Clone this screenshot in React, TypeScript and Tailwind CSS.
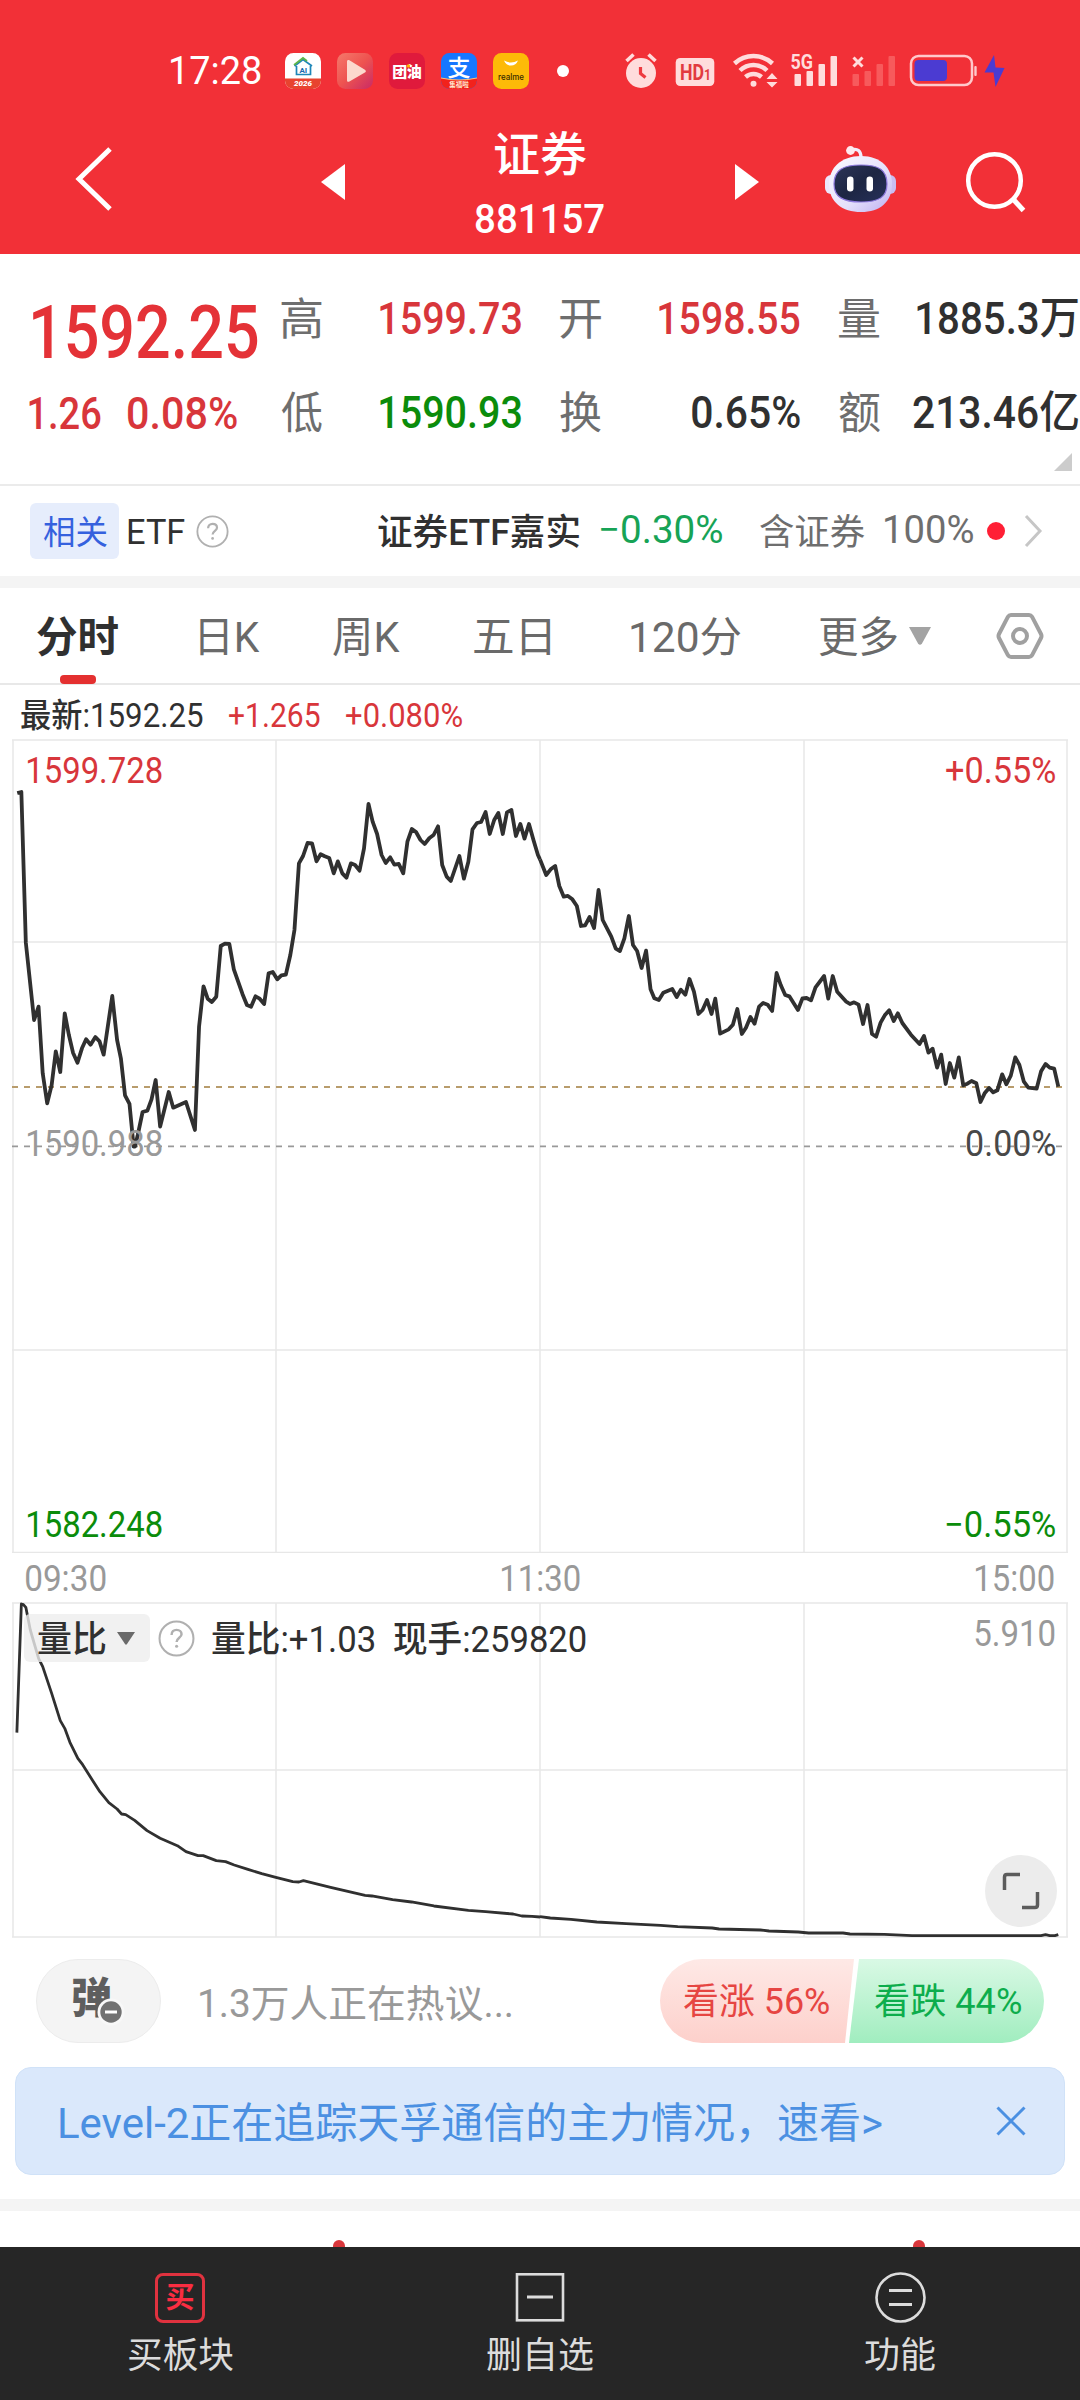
import { useLayoutEffect, useRef, type ReactNode } from "react";

/** Single line of text whose ink is stretched to exactly fill the width of its box. */
function Fit({ children, className = "" }: { children: string; className?: string }) {
  const box = useRef<HTMLSpanElement>(null);
  const inner = useRef<HTMLSpanElement>(null);
  useLayoutEffect(() => {
    if (!box.current || !inner.current) return;
    const cs = getComputedStyle(inner.current);
    const ctx = document.createElement("canvas").getContext("2d");
    if (!ctx) return;
    ctx.font = `${cs.fontWeight} ${cs.fontSize} ${cs.fontFamily}`;
    const m = ctx.measureText(children);
    const ink = m.actualBoundingBoxLeft + m.actualBoundingBoxRight;
    const k = box.current.clientWidth / ink;
    inner.current.style.transform = `scaleX(${k}) translateX(${m.actualBoundingBoxLeft}px)`;
  });
  return (
    <span ref={box} className={`block shrink-0 leading-none ${className}`}>
      <span ref={inner} className="inline-block origin-left align-top whitespace-pre">
        {children}
      </span>
    </span>
  );
}

const MORNING =
  "50,189 62,186 75,638 99,870 112,830 124,1030 137,1120 150,1065 162,964 175,1026 188,850 200,915 212,968 225,998 238,955 250,928 263,944 277,921 289,934 301,974 326,798 340,930 351,985 363,1096 376,1122 388,1250 392,1250 400,1215 414,1146 428,1142 440,1108 452,1050 465,1190 490,1086 503,1133 540,1116 566,1200 578,890 591,769 603,806 615,816 628,800 641,648 653,641 666,642 679,718 704,792 717,825 729,830 742,799 754,806 767,822 780,730 792,726 805,748 817,736 830,734 843,675 855,600 868,400 880,378 893,339 906,340 919,394 931,373 943,379 956,384 969,430 981,394 994,430 1006,443 1019,400 1031,405 1044,422 1057,355 1070,222 1082,275 1095,312 1108,375 1120,399 1133,382 1145,404 1158,402 1171,430 1183,335 1196,297 1208,306 1221,330 1233,342 1247,324 1259,315 1272,289 1284,405 1297,440 1309,453 1334,378 1347,446 1360,395 1372,298 1385,279 1397,276 1410,246 1422,312 1435,270 1447,249 1460,312 1472,247 1485,240 1498,318 1511,282 1523,326 1536,282 1549,330 1562,375 1568,388";
const AFTERNOON =
  "0,388 18,435 31,418 44,408 56,468 69,500 81,498 94,508 107,528 119,588 131,586 144,561 157,594 170,480 182,570 207,620 220,656 232,663 245,625 258,558 270,645 282,663 295,714 308,662 321,778 332,805 345,810 358,788 384,777 397,801 409,779 422,794 434,747 447,785 460,852 472,840 485,810 498,852 509,806 523,911 548,898 560,884 573,837 586,912 598,893 611,861 623,881 636,830 648,819 661,824 674,843 687,729 699,765 712,795 724,799 749,840 762,805 774,804 787,811 800,772 825,738 837,806 850,738 863,785 888,814 900,822 912,817 925,824 938,882 951,825 964,912 976,920 989,878 1001,856 1014,841 1027,873 1039,850 1052,879 1077,914 1102,942 1115,918 1128,968 1140,956 1153,1013 1165,974 1178,1062 1190,999 1203,1043 1216,982 1229,1066 1241,1061 1253,1053 1267,1060 1279,1116 1291,1090 1304,1074 1316,1087 1328,1081 1342,1033 1354,1063 1367,1037 1380,982 1392,1005 1405,1055 1418,1073 1442,1076 1455,1024 1468,1002 1480,1013 1493,1016 1505,1070";
const VOL_MORNING =
  "49,698 62,312 68,314 75,322 88,390 112,475 124,500 150,580 175,662 188,685 203,727 226,775 240,794 268,840 290,875 316,908 340,927 353,942 365,944 391,961 427,992 465,1015 515,1037 540,1055 575,1067 590,1067 628,1082 655,1085 680,1095 720,1108 760,1121 801,1132 850,1145 868,1146 881,1142 960,1162 1060,1186 1080,1188 1140,1199 1195,1206 1260,1218 1360,1231 1410,1235 1490,1242 1515,1248 1545,1249 1568,1251";
const VOL_AFTERNOON =
  "0,1250 30,1254 90,1258 165,1266 250,1271 350,1276 400,1280 500,1284 520,1287 640,1290 665,1293 750,1296 780,1299 880,1299 900,1302 1000,1303 1080,1307 1455,1307 1468,1304 1480,1307 1495,1307 1505,1304";

function Line({ a, b, w, dy }: { a: string; b: string; w: number; dy: number }) {
  const common = {
    fill: "none",
    stroke: "#303030",
    strokeWidth: w,
    strokeLinejoin: "round" as const,
    vectorEffect: "non-scaling-stroke" as const,
  };
  return (
    <g transform={`translate(0 ${dy}) scale(.34439 .33333)`}>
      <polyline points={a} {...common} />
      <polyline points={b} transform="translate(1568 0)" {...common} />
    </g>
  );
}

function Grid({ rows, h }: { rows: number[]; h: number }) {
  return (
    <g stroke="#e7e7e7" strokeWidth="1.5">
      {[13, 276, 540, 804, 1067].map((x) => (
        <line key={x} x1={x} x2={x} y1={rows[0]} y2={h} />
      ))}
      {rows.map((y) => (
        <line key={y} x1="12" x2="1068" y1={y} y2={y} />
      ))}
    </g>
  );
}

function Help({ className, size }: { className: string; size: number }) {
  return (
    <svg width={size} height={size} viewBox="0 0 36 36" className={`shrink-0 ${className}`} fill="none" stroke="#b0b0b0" strokeWidth="2">
      <circle cx="18" cy="18" r="16.5" />
      <path d="M13.2 14.5c0-3 2-4.900 4.900-4.900s4.800 1.800 4.800 4.300c0 3.300-4.800 3.500-4.800 7.400" strokeWidth="2.400" />
      <circle cx="18.100" cy="25.600" r="1.500" fill="#b0b0b0" stroke="none" />
    </svg>
  );
}

function AppIcons() {
  const t = { fontFamily: "Noto Sans CJK SC, sans-serif", textAnchor: "middle" as const };
  const r = { fontFamily: "Roboto, sans-serif", textAnchor: "middle" as const };
  return (
    <div className="ml-6 flex gap-4">
      <svg width="36" height="36" viewBox="0 0 36 36" className="overflow-visible">
        <defs>
          <clipPath id="r">
            <rect width="36" height="36" rx="8.500" />
          </clipPath>
          <linearGradient id="play" x1="0" y1="0" x2="1" y2="1">
            <stop offset="0" stopColor="#f5796b" />
            <stop offset=".5" stopColor="#ee5350" />
            <stop offset="1" stopColor="#c92a66" />
          </linearGradient>
        </defs>
        <g clipPath="url(#r)">
          <rect width="36" height="36" fill="#fff" />
          <rect y="25.500" width="36" height="11" fill="#e8432f" />
        </g>
        <path d="M9.500 13 18 6.500 27 13M11.500 13v8.500h14V13" fill="none" stroke="#1d86b8" strokeWidth="1.700" />
        <path d="M9 12 18 5l4 3" fill="none" stroke="#5fb54a" strokeWidth="1.800" />
        <text x="18.300" y="19.700" fontSize="8" fontWeight="700" fill="#1769ae" {...r}>AI</text>
        <text x="18" y="33.300" fontSize="8" fontStyle="italic" fontWeight="900" fill="#fff" {...r}>2026</text>
      </svg>
      <svg width="36" height="36" viewBox="0 0 36 36">
        <rect width="36" height="36" rx="8.500" fill="url(#play)" />
        <path d="M10 8.500c0-1.500 1.200-2 2.400-1.200l15.500 9.400c1.300.8 1.300 2 0 2.800l-15.500 9c-1.200.8-2.400.2-2.400-1.200z" fill="#fcd9cd" />
      </svg>
      <svg width="36" height="36" viewBox="0 0 36 36" className="overflow-visible">
        <rect width="36" height="36" rx="8.500" fill="#e01a3c" />
        <text x="10.800" y="24" fontSize="15" fontWeight="900" fill="#fff" {...t}>团</text>
        <text x="25.300" y="24" fontSize="15" fontWeight="900" fill="#fff" {...t}>油</text>
        <circle cx="19.400" cy="13" r="1.700" fill="#ffb300" />
      </svg>
      <svg width="36" height="36" viewBox="0 0 36 36" className="overflow-visible">
        <g clipPath="url(#r)">
          <rect width="36" height="36" fill="#1677ff" />
          <path d="M0 25q18 4 36 0v12H0z" fill="#f2221c" />
          <path d="M0 25q18 4 36 0" stroke="#ffc07a" strokeWidth="1" fill="none" />
        </g>
        <text x="18" y="22.500" fontSize="23" fontWeight="500" fill="#fff" {...t}>支</text>
        <text x="18" y="33.500" fontSize="6.500" fontWeight="700" fill="#ffe9d0" {...t}>集福啦</text>
      </svg>
      <svg width="36" height="36" viewBox="0 0 36 36">
        <rect width="36" height="36" rx="8.500" fill="#fdba08" />
        <path d="M11 7.500q7 4 14 0-2 5-7 5t-7-5" fill="#fff" />
        <text x="18" y="26.700" fontSize="9" textLength="26" lengthAdjust="spacingAndGlyphs" fontWeight="500" fill="#3a2b00" textAnchor="middle" fontFamily="Inter, sans-serif">realme</text>
      </svg>
    </div>
  );
}

function SystemIcons() {
  const c = "#ffdcdc";
  return (
    <svg width="384" height="40" viewBox="624 51 384 40" className="ml-[55px] shrink-0">
      <circle cx="641" cy="73" r="15" fill={c} />
      <path d="m626.500 61 7-6.500M655.500 61l-7-6.500" stroke={c} strokeWidth="3.600" />
      <path d="M640.500 67v6.500l5 4" fill="none" stroke="#ee3a40" strokeWidth="3.200" />
      <rect x="675.700" y="58" width="38.600" height="28" rx="4.500" fill={c} />
      <text x="680" y="79.500" fontSize="21.500" fontWeight="700" textLength="24" lengthAdjust="spacingAndGlyphs" fill="#e23a40" fontFamily="Roboto, sans-serif">HD</text>
      <text x="704" y="79.500" fontSize="14" fontWeight="700" textLength="7" lengthAdjust="spacingAndGlyphs" fill="#e23a40" fontFamily="Roboto, sans-serif">1</text>
      <g fill="none" stroke={c} strokeWidth="4.500">
        <path d="M734.500 63.500a28 28 0 0 1 38 0" />
        <path d="M740 70.500a19.500 19.500 0 0 1 27 0" />
        <path d="M745.500 77a12 12 0 0 1 16 0" />
      </g>
      <circle cx="753.500" cy="83.700" r="3" fill={c} />
      <path d="m766.500 79 5.500-6 5.500 6zM766.500 82l5.500 5.500 5.500-5.500z" fill={c} />
      <text x="790.500" y="69" fontSize="20" fontWeight="700" textLength="22.500" lengthAdjust="spacingAndGlyphs" fill={c} fontFamily="Roboto, sans-serif">5G</text>
      <g fill={c}>
        <rect x="794.500" y="74" width="6.500" height="12" rx="1" />
        <rect x="806.500" y="71" width="6.500" height="15" rx="1" />
        <rect x="818.500" y="64" width="6.500" height="22" rx="1" />
        <rect x="830.500" y="56" width="6.500" height="30" rx="1" />
      </g>
      <path d="m853.500 57.500 9 9m0-9-9 9" stroke={c} strokeWidth="3" />
      <g fill="#f75a5c">
        <rect x="852.500" y="74" width="6.500" height="12" rx="1" />
        <rect x="864.500" y="71" width="6.500" height="15" rx="1" />
        <rect x="876.500" y="64" width="6.500" height="22" rx="1" />
        <rect x="888.500" y="56" width="6.500" height="30" rx="1" />
      </g>
      <rect x="911" y="56" width="61" height="29" rx="7.500" fill="none" stroke="#ffc9cb" strokeWidth="2.500" />
      <rect x="914.500" y="60" width="32.500" height="21" rx="4" fill="#4b3bd2" />
      <rect x="974.300" y="66" width="2.400" height="10" rx="1" fill="#ffc9cb" />
      <path d="m994 55-9.500 17.500h9l2 14.500L1004.500 68l-9-.5z" fill="#4b3bd2" />
    </svg>
  );
}

function Robot() {
  return (
    <svg width="74" height="68" viewBox="0 0 74 68" className="ml-[65px] mt-[35px] shrink-0">
      <defs>
        <linearGradient id="head" x1="0" y1="0" x2="1" y2="1">
          <stop offset="0" stopColor="#fbfaff" />
          <stop offset=".6" stopColor="#e4dffb" />
          <stop offset="1" stopColor="#bcaef0" />
        </linearGradient>
        <linearGradient id="face" x1="0" y1="0" x2="1" y2="1">
          <stop offset="0" stopColor="#2c3558" />
          <stop offset=".5" stopColor="#1d2643" />
          <stop offset="1" stopColor="#26305a" />
        </linearGradient>
      </defs>
      <path d="M27 5q10-3 10 8" fill="none" stroke="#f1ecfd" strokeWidth="3.400" />
      <circle cx="26.500" cy="5.500" r="4.400" fill="#ffe9ee" />
      <rect x="1" y="30" width="14" height="19" rx="6" fill="#ece7fc" />
      <rect x="58" y="30" width="14" height="19" rx="6" fill="#c9bdf2" />
      <path d="M37 11c20 0 31 12 31 28 0 18-12 28-31 28S5 57 5 39c0-16 12-28 32-28z" fill="url(#head)" />
      <path d="M37 20c18 0 26 5 26 19 0 13-8 18-26 18S10 52 10 39c0-14 9-19 27-19z" fill="url(#face)" stroke="#8d79dc" strokeWidth="1.200" />
      <rect x="23" y="31.500" width="6.500" height="15" rx="3.200" fill="#fff" />
      <rect x="42.500" y="31.500" width="6.500" height="15" rx="3.200" fill="#fff" />
    </svg>
  );
}

function NavItem({ icon, label, w }: { icon: ReactNode; label: string; w: string }) {
  return (
    <div className="flex w-[360px] flex-col items-center pt-6">
      {icon}
      <Fit className={`mt-[14px] text-[36px] ${w}`}>{label}</Fit>
    </div>
  );
}

export default function App() {
  return (
    <div className="flex h-[2400px] w-[1080px] flex-col overflow-hidden bg-white text-[#303030] [font-family:Roboto,'Noto_Sans_CJK_SC',sans-serif]">
      <header className="h-[254px] shrink-0 bg-[#f23037] text-white">
        <div className="flex h-[110px] items-center pt-8">
          <Fit className="ml-[171px] w-[90px] text-[38px] font-[450]">17:28</Fit>
          <AppIcons />
          <span className="ml-7 size-3 shrink-0 rounded-full bg-white" />
          <SystemIcons />
        </div>
        <div className="flex items-start">
          <svg width="42" height="68" viewBox="0 0 42 68" className="ml-[73px] mt-[35px] shrink-0">
            <path d="M37 4 6 34l31 30" fill="none" stroke="#fff" strokeWidth="5" />
          </svg>
          <svg width="24" height="36" viewBox="0 0 24 36" className="ml-[206px] mt-[54px] shrink-0">
            <path d="M24 0v36L0 18z" fill="#fff" />
          </svg>
          <div className="ml-[130px] flex w-[129px] flex-col items-center pt-[21px]">
            <Fit className="w-[91px] pl-px text-[47px] font-medium">证券</Fit>
            <Fit className="mt-[21px] w-[128px] text-[41px] font-medium">881157</Fit>
          </div>
          <svg width="24" height="36" viewBox="0 0 24 36" className="ml-[131px] mt-[54px] shrink-0">
            <path d="M0 0v36l24-18z" fill="#fff" />
          </svg>
          <Robot />
          <svg width="64" height="64" viewBox="0 0 64 64" className="ml-[66px] mt-[40px] shrink-0" fill="none" stroke="#fff" strokeWidth="4.500">
            <circle cx="30.500" cy="30.500" r="26.300" />
            <path d="m49 49 10.500 11.500" strokeWidth="5" />
          </svg>
        </div>
      </header>

      <section className="relative flex h-[232px] shrink-0 border-b-2 border-[#ebebeb]">
        <div className="w-[281px] pt-[42px] text-[#e43237]">
          <Fit className="ml-[33px] w-[225px] text-[74px] font-[550]">1592.25</Fit>
          <div className="mt-[22px] ml-[29px] flex gap-[27px] text-[44px] font-medium text-[#d8363b]">
            <Fit className="w-[72px]">1.26</Fit>
            <Fit className="w-[109px]">0.08%</Fit>
          </div>
        </div>
        <div className="flex flex-col gap-[49px] pt-[43px] text-[44px]">
          <div className="flex">
            <Fit className="w-[41px] pt-px text-[#6e6e6e]">高</Fit>
            <Fit className="ml-[58px] w-[141px] font-medium text-[#d8363b]">1599.73</Fit>
            <Fit className="ml-[39px] w-[41px] pt-px text-[#6e6e6e]">开</Fit>
            <Fit className="ml-[58px] w-[141px] font-medium text-[#d8363b]">1598.55</Fit>
            <Fit className="ml-[39px] w-[41px] pt-px text-[#6e6e6e]">量</Fit>
            <Fit className="ml-[37px] w-[161px] font-medium">1885.3万</Fit>
          </div>
          <div className="flex">
            <Fit className="w-[41px] pt-px text-[#6e6e6e]">低</Fit>
            <Fit className="ml-[58px] w-[141px] font-medium text-[#0b8c0b]">1590.93</Fit>
            <Fit className="ml-[39px] w-[41px] pt-px text-[#6e6e6e]">换</Fit>
            <Fit className="ml-[91px] w-[108px] font-medium">0.65%</Fit>
            <Fit className="ml-[39px] w-[41px] pt-px text-[#6e6e6e]">额</Fit>
            <Fit className="ml-[33px] w-[165px] font-medium">213.46亿</Fit>
          </div>
        </div>
        <svg width="18" height="18" viewBox="0 0 18 18" className="absolute right-2 bottom-[13px]">
          <path d="M18 0v18H0z" fill="#cccccc" />
        </svg>
      </section>

      <section className="flex h-[90px] shrink-0 items-center">
        <div className="ml-[30px] flex h-14 w-[89px] items-center justify-center rounded-md bg-[#e6edfc] pt-0.5 text-[#3561de]">
          <Fit className="w-[64px] text-[33px]">相关</Fit>
        </div>
        <Fit className="ml-[9px] w-[57px] pt-0.5 text-[35px]">ETF</Fit>
        <Help size={33} className="ml-[11px]" />
        <Fit className="ml-[149px] w-[201px] pt-[3px] text-[36px] font-medium">证券ETF嘉实</Fit>
        <Fit className="ml-[22px] w-[121px] pb-0.5 text-[39px] font-[450] text-[#17a356]">−0.30%</Fit>
        <Fit className="ml-[38px] w-[105px] pt-[3px] text-[36px] text-[#6e6e6e]">含证券</Fit>
        <Fit className="ml-[20px] w-[88px] pb-0.5 text-[39px] text-[#6e6e6e]">100%</Fit>
        <span className="ml-[14px] size-[18px] rounded-full bg-[#ff1f35]" />
        <svg width="20" height="34" viewBox="0 0 20 34" className="ml-[19px]">
          <path d="m2 2 14 15L2 32" fill="none" stroke="#c6c6c6" strokeWidth="3" />
        </svg>
      </section>
      <div className="h-3 shrink-0 bg-[#f4f4f4]" />

      <nav className="relative flex h-[97px] shrink-0 items-center border-b-2 border-[#e8e8e8] text-[42px] text-[#6a6a6a]">
        <Fit className="ml-[37px] w-[81px] pt-[5px] font-bold text-[#303030]">分时</Fit>
        <Fit className="ml-[82px] w-[60px] pt-[5px]">日K</Fit>
        <Fit className="ml-[73px] w-[67px] pt-[5px]">周K</Fit>
        <Fit className="ml-[74px] w-[76px] pt-[5px]">五日</Fit>
        <Fit className="ml-[81px] w-[110px] pt-[5px]">120分</Fit>
        <Fit className="ml-[78px] w-[78px] pt-[5px]">更多</Fit>
        <svg width="22" height="18" viewBox="0 0 22 18" className="ml-3">
          <path d="M0 0h22L13 16.500q-2 2.500-4 0z" fill="#a3a3a3" />
        </svg>
        <svg width="48" height="48" viewBox="0 0 48 48" className="ml-[65px]" fill="none" stroke="#a0a0a0" strokeWidth="4">
          <path d="M15 3h18q2 0 3 1.700L45 22q1 2 0 4l-9 17.300Q35 45 33 45H15q-2 0-3-1.700L3 26q-1-2 0-4l9-17.300Q13 3 15 3z" />
          <circle cx="24" cy="24" r="7" />
        </svg>
        <span className="absolute -bottom-px left-[60px] h-[9px] w-9 rounded bg-[#e43030]" />
      </nav>

      <div className="flex h-[54px] shrink-0 items-center pt-1.5 text-[33px] font-[450] text-[#d8363b]">
        <Fit className="ml-[21px] w-[182px] text-[#303030]">最新:1592.25</Fit>
        <Fit className="ml-[26px] w-[91px]">+1.265</Fit>
        <Fit className="ml-[26px] w-[116px]">+0.080%</Fit>
      </div>

      <section className="relative h-[814px] shrink-0 text-[36px]">
        <svg width="1080" height="814" viewBox="0 739 1080 814" className="block">
          <Grid rows={[740, 942, 1350, 1552.5]} h={1552} />
          <line x1="12" x2="1063" y1="1087" y2="1087" stroke="#b89c6c" strokeWidth="1.800" strokeDasharray="6 6" />
          <line x1="12" x2="1063" y1="1146.300" y2="1146.300" stroke="#999999" strokeWidth="1.800" strokeDasharray="6 6" />
          <Line a={MORNING} b={AFTERNOON} w={3.8} dy={730} />
        </svg>
        <div className="absolute inset-0 flex flex-col font-[450]">
          <div className="mt-[14px] flex justify-between pr-[25px] pl-[28px] text-[#d8363b]">
            <Fit className="w-[134px]">1599.728</Fit>
            <Fit className="w-[109px]">+0.55%</Fit>
          </div>
          <div className="mt-[337px] flex justify-between pr-[25px] pl-[28px]">
            <Fit className="w-[134px] text-[#999999]">1590.988</Fit>
            <Fit className="w-[88px] text-[#484848]">0.00%</Fit>
          </div>
          <div className="mt-[345px] flex justify-between pr-[25px] pl-[28px] text-[#0b8c0b]">
            <Fit className="w-[134px]">1582.248</Fit>
            <Fit className="w-[109px]">−0.55%</Fit>
          </div>
        </div>
      </section>

      <div className="flex h-[49px] shrink-0 items-center justify-between pt-[3px] pr-[26px] pl-[26px] text-[36px] font-[450] text-[#999999]">
        <Fit className="w-[80px]">09:30</Fit>
        <Fit className="w-[78px]">11:30</Fit>
        <Fit className="w-[78px]">15:00</Fit>
      </div>

      <section className="relative h-[337px] shrink-0">
        <svg width="1080" height="337" viewBox="0 1602 1080 337" className="block">
          <Grid rows={[1603, 1770, 1937]} h={1937} />
          <Line a={VOL_MORNING} b={VOL_AFTERNOON} w={2.8} dy={1500} />
        </svg>
        <div className="absolute inset-x-0 top-3 flex h-12 items-center">
          <div className="ml-6 flex h-12 w-[126px] items-center rounded-md bg-[#eeeeee]/80">
            <Fit className="ml-[14px] w-[68px] pt-[3px] text-[36px] font-[450]">量比</Fit>
            <svg width="18" height="13" viewBox="0 0 18 13" className="ml-[11px]">
              <path d="M0 0h18l-8 12q-1 1.500-2 0z" fill="#6a6a6a" />
            </svg>
          </div>
          <Help size={37} className="ml-2" />
          <Fit className="ml-[17px] w-[162px] pt-[3px] text-[36px] font-[450]">量比:+1.03</Fit>
          <Fit className="ml-[20px] w-[192px] pt-[3px] text-[36px] font-[450]">现手:259820</Fit>
          <Fit className="ml-[389px] w-[80px] pb-[9px] text-[36px] font-[450] text-[#999999]">5.910</Fit>
        </div>
        <div className="absolute top-[253px] right-[23px] flex size-[72px] items-center justify-center rounded-full bg-[#ececec]">
          <svg width="38" height="38" viewBox="0 0 38 38" fill="none" stroke="#5c5c5c" strokeWidth="3.500">
            <path d="M2.500 18V5q0-2.500 2.500-2.500h13M35.500 20v13q0 2.500-2.500 2.500H20" />
          </svg>
        </div>
      </section>

      <section className="mt-5 flex h-[84px] shrink-0 pl-9">
        <div className="relative flex w-[125px] items-center justify-center rounded-full border border-[#ececec] bg-[#f4f4f4] pr-[14px] pb-1">
          <Fit className="w-[38px] text-[42px] font-black text-[#5e5e5e]">弹</Fit>
          <svg width="28" height="28" viewBox="0 0 28 28" className="absolute top-[38px] left-[60px]">
            <circle cx="14" cy="14" r="13.500" fill="#f8f8f8" />
            <circle cx="14" cy="14" r="10.700" fill="#727272" />
            <path d="M8 14h12" stroke="#fff" strokeWidth="3" />
          </svg>
        </div>
        <Fit className="mt-[26px] ml-[39px] w-[311px] text-[38px] text-[#999999]">1.3万人正在热议...</Fit>
        <div className="ml-[149px] flex">
          <div className="flex w-[194px] items-center rounded-l-full bg-gradient-to-b from-[#fee9e6] to-[#fdd0cb] [clip-path:polygon(0_0,100%_0,185px_100%,0_100%)]">
            <Fit className="ml-6 w-[145px] pt-0.5 text-[36px] text-[#e64542]">看涨 56%</Fit>
          </div>
          <div className="-ml-[5px] flex w-[195px] items-center rounded-r-full bg-gradient-to-b from-[#d9f9e5] to-[#a0edbf] [clip-path:polygon(10px_0,100%_0,100%_100%,0_100%)]">
            <Fit className="ml-[26px] w-[146px] pt-0.5 text-[36px] text-[#0dad4c]">看跌 44%</Fit>
          </div>
        </div>
      </section>

      <section className="mx-[15px] mt-6 flex h-[108px] shrink-0 items-center rounded-2xl border border-[#d0e2f8] bg-[#dae8fb] text-[#4b90e2]">
        <Fit className="ml-[44px] w-[822px] pt-[5px] text-[42px]">Level-2正在追踪天孚通信的主力情况，速看&gt;</Fit>
        <svg width="30" height="30" viewBox="0 0 30 30" className="ml-[114px]" stroke="#4b90e2" strokeWidth="3">
          <path d="m1.500 1.500 27 27m0-27-27 27" />
        </svg>
      </section>
      <div className="mt-6 h-3 shrink-0 bg-[#f4f4f4]" />
      <div className="flex h-9 shrink-0 items-start overflow-hidden pt-[29px]">
        <span className="ml-[333px] size-3 shrink-0 rounded-full bg-[#d8363b]" />
        <span className="ml-[568px] size-3 shrink-0 rounded-full bg-[#d8363b]" />
      </div>

      <footer className="flex h-[153px] shrink-0 bg-[#262626] text-[#dcdcdc]">
        <NavItem
          label="买板块"
          w="w-[105px]"
          icon={
            <div className="mt-[2px] mb-px flex size-[50px] items-center justify-center rounded-lg border-3 border-[#e0323f] text-[#fa2d41]">
              <Fit className="w-[27px] text-[29px] font-bold">买</Fit>
            </div>
          }
        />
        <NavItem
          label="删自选"
          w="w-[106px]"
          icon={
            <svg width="50" height="53" viewBox="0 0 50 53" fill="none" stroke="#dcdcdc" strokeWidth="2.600">
              <rect x="2" y="3.300" width="46" height="46" />
              <path d="M12 26h26" strokeWidth="3" />
            </svg>
          }
        />
        <NavItem
          label="功能"
          w="w-[70px]"
          icon={
            <svg width="53" height="53" viewBox="0 0 53 53" fill="none" stroke="#dcdcdc" strokeWidth="2.600">
              <circle cx="26.500" cy="26.500" r="24" />
              <path d="M15 19.500h23M15 33.500h23" strokeWidth="3" />
            </svg>
          }
        />
      </footer>
    </div>
  );
}
